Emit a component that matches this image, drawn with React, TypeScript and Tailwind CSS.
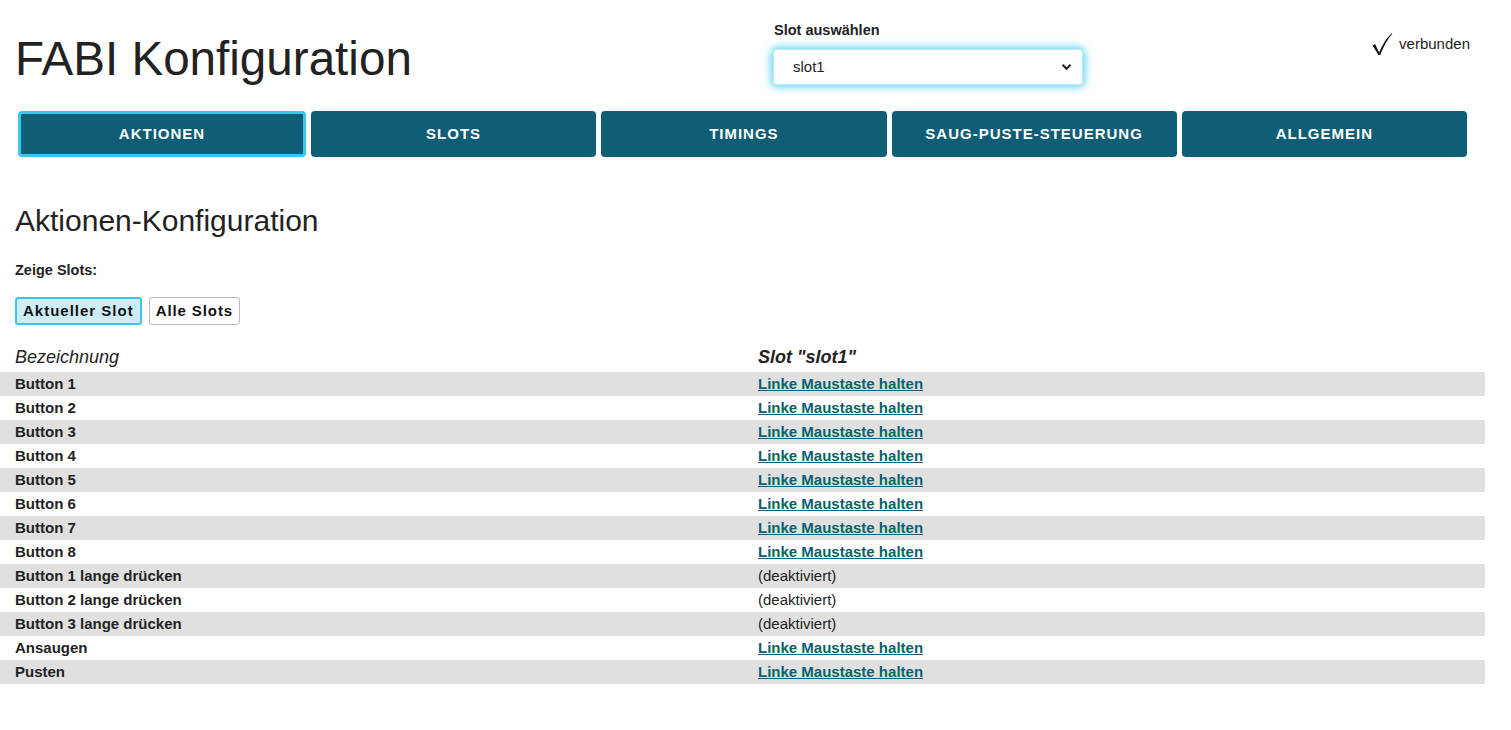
import React from "react";

const rows: { name: string; action: string | null }[] = [
  { name: "Button 1", action: "Linke Maustaste halten" },
  { name: "Button 2", action: "Linke Maustaste halten" },
  { name: "Button 3", action: "Linke Maustaste halten" },
  { name: "Button 4", action: "Linke Maustaste halten" },
  { name: "Button 5", action: "Linke Maustaste halten" },
  { name: "Button 6", action: "Linke Maustaste halten" },
  { name: "Button 7", action: "Linke Maustaste halten" },
  { name: "Button 8", action: "Linke Maustaste halten" },
  { name: "Button 1 lange drücken", action: null },
  { name: "Button 2 lange drücken", action: null },
  { name: "Button 3 lange drücken", action: null },
  { name: "Ansaugen", action: "Linke Maustaste halten" },
  { name: "Pusten", action: "Linke Maustaste halten" },
];

const tabs = ["AKTIONEN", "SLOTS", "TIMINGS", "SAUG-PUSTE-STEUERUNG", "ALLGEMEIN"];

export default function App() {
  return (
    <div className="min-h-[730px] w-[1511px] bg-white text-[#222] font-['Liberation_Sans',Arial,sans-serif]">
      {/* Header */}
      <div className="flex items-start pl-[15px]">
        <div className="w-[758px] pt-[31px]">
          <h1 className="text-[47.6px] leading-[55px] font-normal text-[#222]">FABI Konfiguration</h1>
        </div>
        <div className="w-[310px] pt-[22px]">
          <div className="text-[14.5px] leading-[17px] font-bold pl-[1px]">Slot auswählen</div>
          <div className="mt-[10px] h-[36px] w-[310px] rounded-[4px] border border-[#bfe9f7] bg-white shadow-[0_0_8px_2px_#5fd3f5] flex items-center justify-between pl-[19px] pr-[10px]">
            <span className="text-[15px] text-[#222]">slot1</span>
            <svg width="11" height="8" viewBox="0 0 11 8">
              <path d="M1.5 1.8 L5.5 5.8 L9.5 1.8" fill="none" stroke="#222" strokeWidth="2" />
            </svg>
          </div>
        </div>
        <div className="flex-1 flex justify-end pr-[41px] pt-[29px]">
          <div className="flex items-center gap-[6px]">
            <svg width="22" height="24" viewBox="0 0 22 24" className="mt-[3px]">
              <path d="M1.5 13.5 L4 12 L8.2 20.5 Q13 8 20.8 1.2 L21.3 1.8 Q14.5 9.5 9.2 23 L7.6 23 Z" fill="#111" />
            </svg>
            <span className="text-[15px] leading-[17px] text-[#222] pt-[1px]">verbunden</span>
          </div>
        </div>
      </div>

      {/* Tabs */}
      <div className="mt-[25px] flex gap-[5px] pl-[18px] w-[1467px]">
        {tabs.map((t, i) => (
          <div
            key={t}
            className={
              "h-[46px] rounded-[4px] bg-[#0f5e75] flex items-center justify-center text-white font-bold text-[15px] tracking-[1px] " +
              (i === 0 ? "w-[288px] border-[3px] border-[#3bc6ee]" : "flex-1")
            }
          >
            {t}
          </div>
        ))}
      </div>

      {/* Section */}
      <div className="pl-[15px]">
        <h2 className="mt-[47px] text-[30px] leading-[34px] font-normal text-[#222]">Aktionen-Konfiguration</h2>
        <div className="mt-[24px] text-[14.5px] leading-[17px] font-bold">Zeige Slots:</div>
        <div className="mt-[18px] flex gap-[7px]">
          <div className="h-[28px] px-[6px] rounded-[3px] border-2 border-[#3bc6ee] bg-[#cdeef9] flex items-center text-[15px] font-bold tracking-[1px] text-[#111]">
            Aktueller Slot
          </div>
          <div className="h-[28px] px-[6px] rounded-[3px] border border-[#bbb] bg-white flex items-center text-[15px] font-bold tracking-[0.9px] text-[#111]">
            Alle Slots
          </div>
        </div>
      </div>

      {/* Table */}
      <div className="mt-[17px] w-[1485px]">
        <div className="grid grid-cols-[758px_1fr] h-[30px] items-center">
          <div className="pl-[15px] italic text-[18px] text-[#222]">Bezeichnung</div>
          <div className="italic font-bold text-[18px] text-[#222]">Slot "slot1"</div>
        </div>
        {rows.map((r, i) => (
          <div
            key={r.name}
            className={
              "grid grid-cols-[758px_1fr] h-[24px] items-center " + (i % 2 === 0 ? "bg-[#e0e0e0]" : "bg-white")
            }
          >
            <div className="pl-[15px] font-bold text-[15px] text-[#222]">{r.name}</div>
            <div className="text-[15px]">
              {r.action ? (
                <a href="#" className="font-bold text-[#0f5e75] underline">
                  {r.action}
                </a>
              ) : (
                <span className="text-[#222]">(deaktiviert)</span>
              )}
            </div>
          </div>
        ))}
      </div>
    </div>
  );
}
